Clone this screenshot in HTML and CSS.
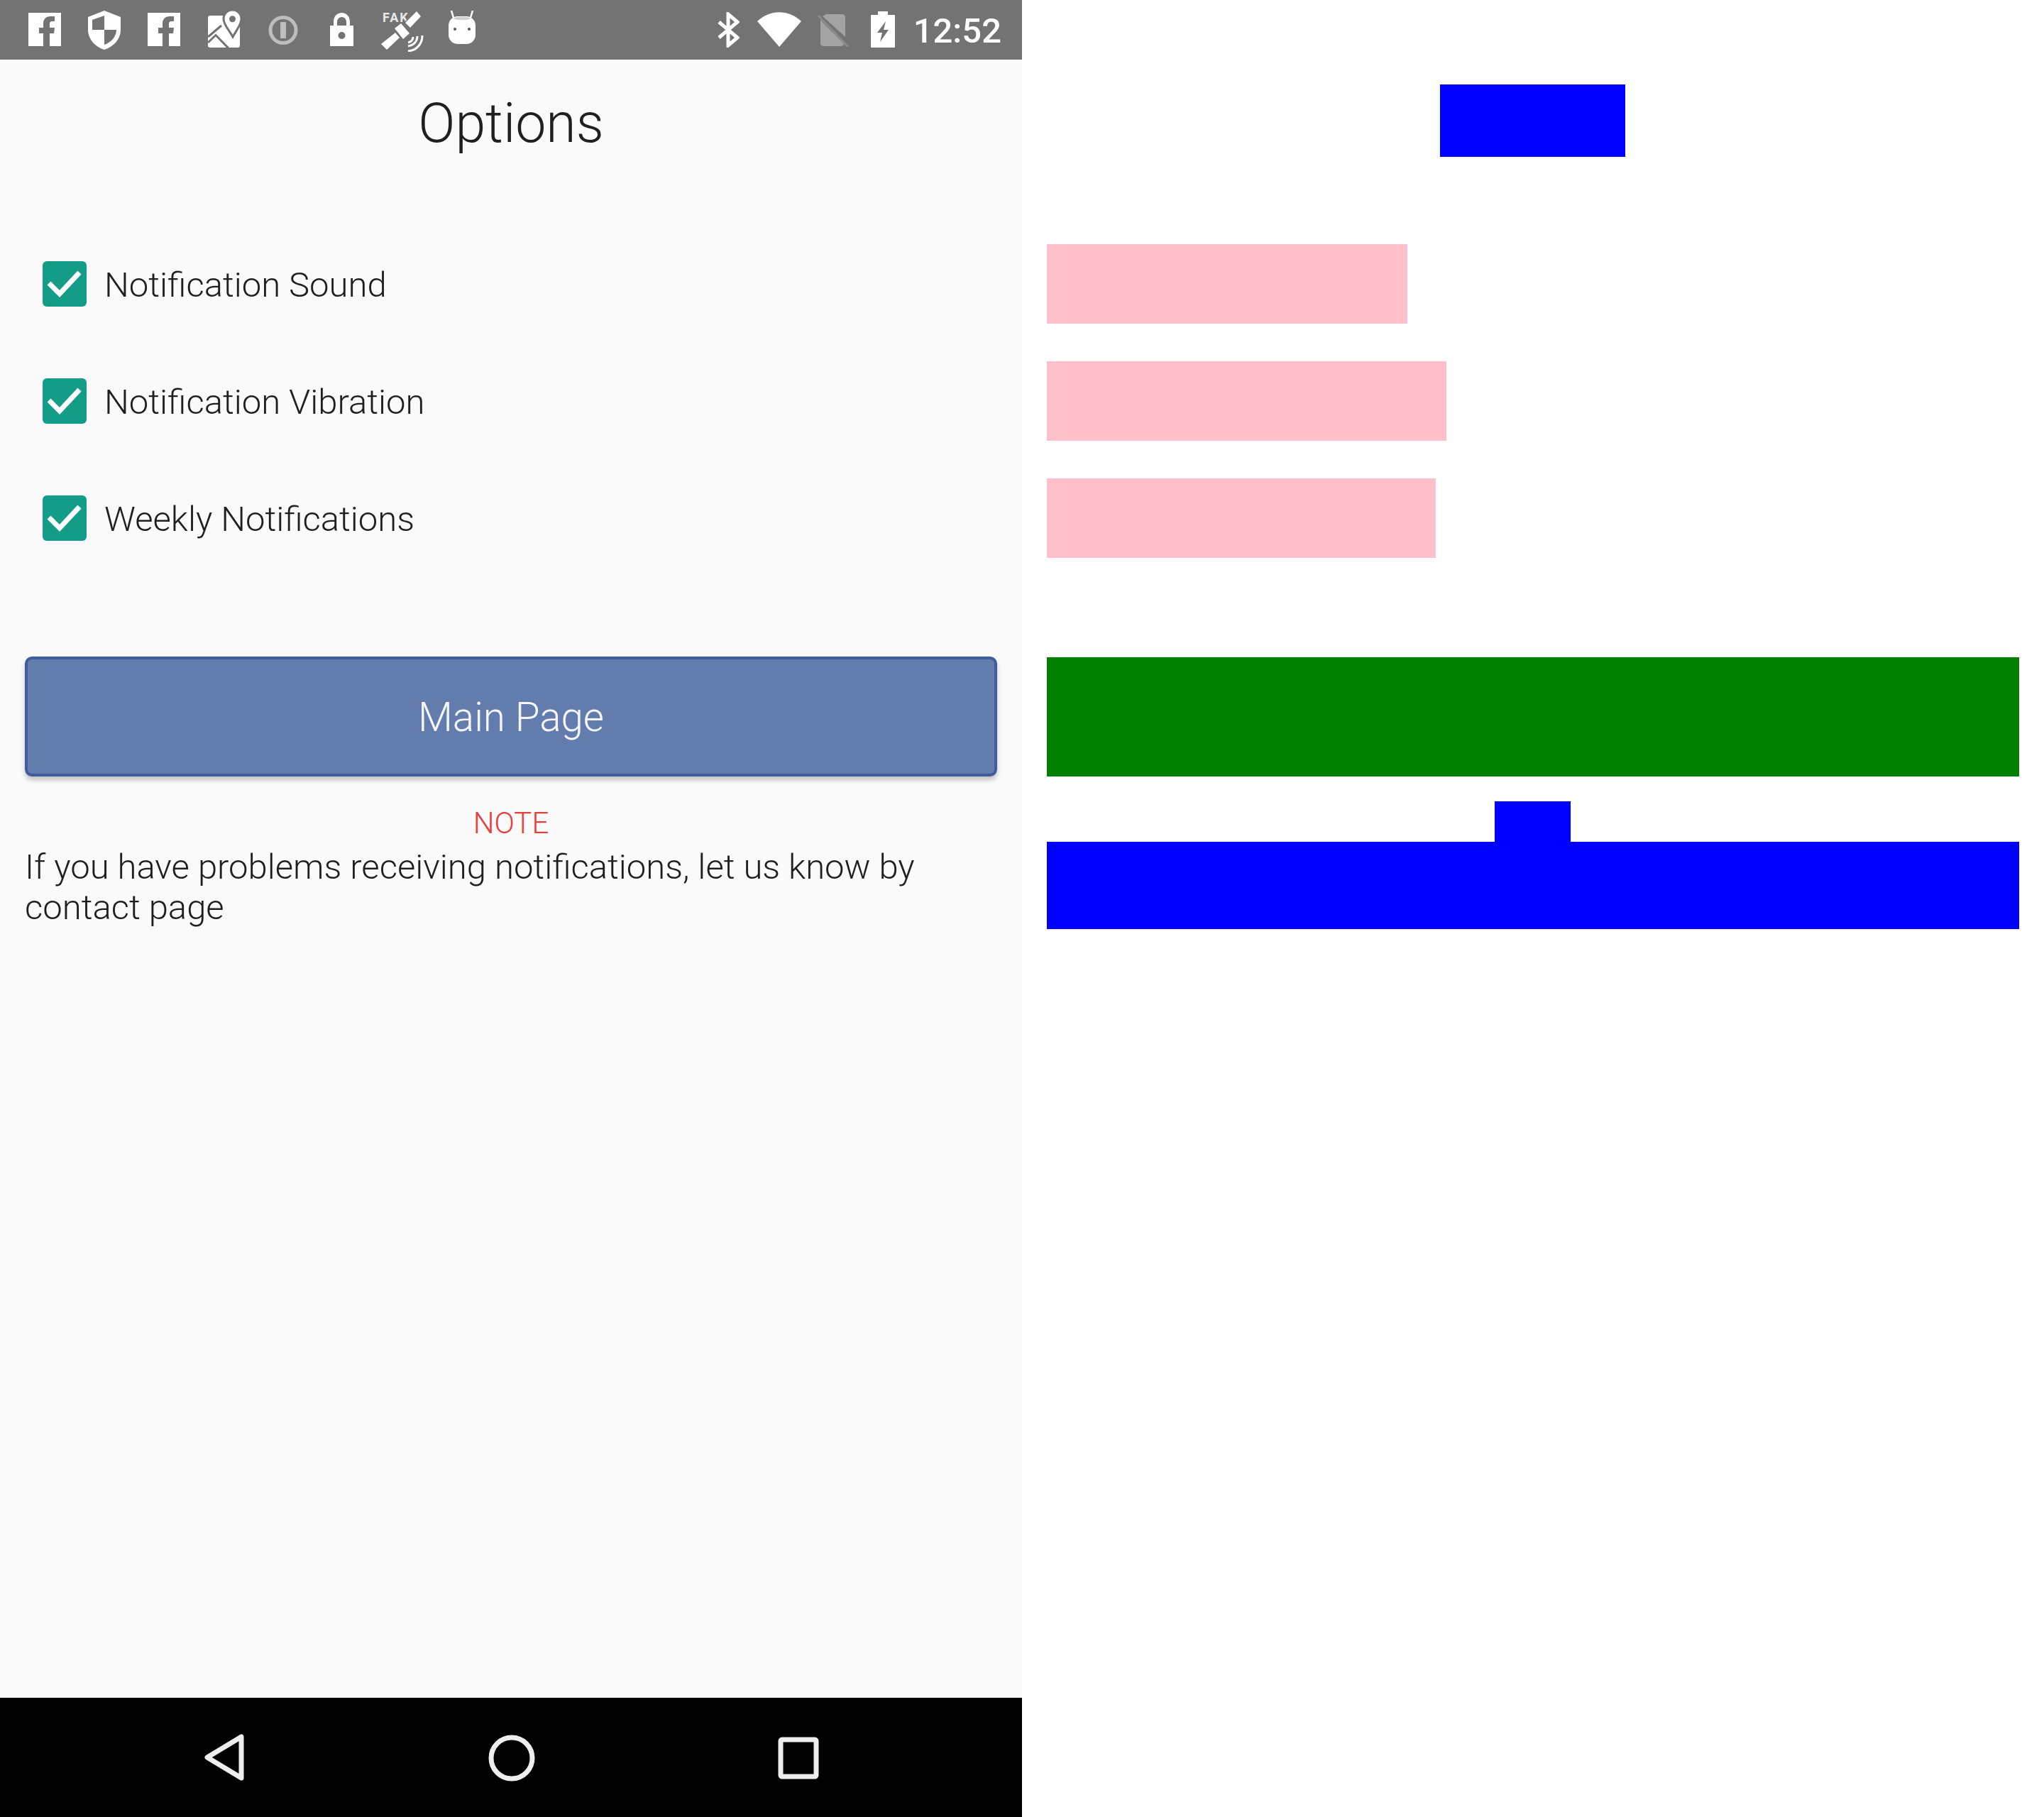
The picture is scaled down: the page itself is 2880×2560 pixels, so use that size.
FILE: index.html
```html
<!DOCTYPE html>
<html lang="en">
<head>
  <meta charset="UTF-8">
  <title>Options</title>
  <link rel="stylesheet" href="styles.css">
</head>
<body>

  <div class="phone">
    <header class="status-bar">
      <div class="status-icons">
        <svg class="ic-fb" viewBox="0 0 46 47"><path fill="#fff" d="M0 0H46V47H30V29H36L37 21H30V16C30 13 31 12 34 12H37V5C35 5 33 5 31 5C25 5 21 9 21 15V21H15V29H21V47H0Z"/></svg>
        <svg class="ic-shield" viewBox="0 0 46 55"><path fill="#fff" fill-rule="evenodd" d="M23 0L46 9V27C46 40 36 51 23 55C10 51 0 40 0 27V9ZM23 7L6 13V27H23ZM23 27V48C32 45 40 37 40 27Z"/></svg>
        <svg class="ic-fb" viewBox="0 0 46 47"><path fill="#fff" d="M0 0H46V47H30V29H36L37 21H30V16C30 13 31 12 34 12H37V5C35 5 33 5 31 5C25 5 21 9 21 15V21H15V29H21V47H0Z"/></svg>
        <svg class="ic-map" viewBox="0 0 48 53">
          <rect x="1" y="8" width="45" height="45" rx="3" fill="#fff"/>
          <path fill="none" stroke="#737373" stroke-width="3" d="M1 38L20 22M1 46L12 35.500L30 54"/>
          <path fill="#fff" stroke="#737373" stroke-width="3" d="M35.500 0C42.500 0 48 5.500 48 12.700C48 21 40 30 36 38C32 30 23 21 23 12.700C23 5.500 28.500 0 35.500 0Z"/>
          <circle cx="35.500" cy="12.700" r="4.500" fill="#737373"/>
        </svg>
        <svg class="ic-info" viewBox="0 0 42 43"><circle cx="21" cy="21.500" r="18" fill="none" stroke="#bdbdbd" stroke-width="5"/><rect x="17" y="10" width="8" height="23" fill="#bdbdbd"/></svg>
        <svg class="ic-lock" viewBox="0 0 33 47"><path fill="#fff" fill-rule="evenodd" d="M5 18V13C5 5 10 0 16.500 0S28 5 28 13V18H33V47H0V18ZM10 18H23V13C23 9 20 6 16.500 6S10 9 10 13ZM16.500 27A5 5 0 1 0 16.510 37A5 5 0 1 0 16.500 27Z"/></svg>
        <svg class="ic-sat" viewBox="0 0 60 58">
          <text class="fake-label" x="2" y="16">FAK</text>
          <path fill="#fff" stroke="#737373" stroke-width="1.500" d="M50 0L57 8L41 25L33 17Z"/>
          <path fill="#fff" d="M19 25L28 18L40 32L31 40ZM20 31L26 38L8 55L0 47Z"/>
          <path fill="none" stroke="#fff" stroke-width="3" d="M58 35C58 47 50 56 38 57M51 36C51 43 46 49 38 50M45 37C45 41 42 44 38 45"/>
        </svg>
        <svg class="ic-droid" viewBox="0 0 38 47">
          <rect y="8" width="38" height="39" rx="13" fill="#fff"/>
          <path d="M6 11C12 8 26 8 32 11C26 14 12 14 6 11Z" fill="#cfcfcf"/>
          <path stroke="#fff" stroke-width="2.500" d="M7 10L4 0M31 10L34 0"/>
          <circle cx="9" cy="26" r="2" fill="#555"/>
          <circle cx="29" cy="26" r="2" fill="#555"/>
        </svg>
      </div>
      <div class="status-icons right">
        <svg class="ic-bt" viewBox="0 0 31 50"><path fill="none" stroke="#fff" stroke-width="5" d="M2 14L28 36L15 47V3L28 14L2 36"/></svg>
        <svg class="ic-wifi" viewBox="0 0 62 49"><path fill="#fff" d="M0 13C18 -4 44 -4 62 13L31 49Z"/></svg>
        <svg class="ic-sim" viewBox="0 0 45 46"><path fill="#a3a3a3" d="M13 0H36C38 0 40 2 40 4V32L8 3ZM5 8L38 42C37 44 36 45 34 45H9C7 45 5 43 5 41Z"/><path stroke="#a3a3a3" stroke-width="3" d="M2 2L44 46" opacity=".5"/></svg>
        <svg class="ic-batt" viewBox="0 0 34 51"><path fill="#fff" fill-rule="evenodd" d="M10 0H24V5H34V51H0V5H10ZM21 14L9 30H16L13 43L25 26H18Z"/></svg>
        <span class="clock">12:52</span>
      </div>
    </header>

    <main class="screen">
      <h1 class="title">Options</h1>

      <section class="option-list">
        <label class="option">
          <span class="check"><svg viewBox="0 0 62 64"><path d="M9 31L24 46L52 16"/></svg></span>
          <span class="option-text">Notification Sound</span>
        </label>
        <label class="option">
          <span class="check"><svg viewBox="0 0 62 64"><path d="M9 31L24 46L52 16"/></svg></span>
          <span class="option-text">Notification Vibration</span>
        </label>
        <label class="option">
          <span class="check"><svg viewBox="0 0 62 64"><path d="M9 31L24 46L52 16"/></svg></span>
          <span class="option-text">Weekly Notifications</span>
        </label>
      </section>

      <a href="#" class="main-btn">Main Page</a>

      <p class="note-head">NOTE</p>
      <p class="note-text">If you have problems receiving notifications, let us know by contact page</p>
    </main>

    <nav class="nav-bar">
      <svg class="nav-back" viewBox="0 0 56 66"><path d="M52 4V62L4 33Z"/></svg>
      <svg class="nav-home" viewBox="0 0 66 66"><circle cx="33" cy="33" r="29"/></svg>
      <svg class="nav-recent" viewBox="0 0 58 60"><rect x="4" y="4" width="50" height="52" rx="2"/></svg>
    </nav>
  </div>

  <aside class="layout-view">
    <div class="box box-title"></div>
    <div class="box box-option box-w1"></div>
    <div class="box box-option box-w2"></div>
    <div class="box box-option box-w3"></div>
    <div class="box box-button"></div>
    <div class="box box-note"></div>
    <div class="box box-text"></div>
  </aside>

</body>
</html>
```

FILE: styles.css
```css
/* --- Basic Setup --- */
:root {
  --status-bg: #737373;
  --screen-bg: #fafafa;
  --teal: #139c88;
  --text-color: #1f1f1f;
}

body {
  margin: 0;
  width: 2880px;
  height: 2560px;
  display: flex;
  overflow: hidden;
  background-color: #fff;
  font-family: Roboto, "Liberation Sans", sans-serif;
  font-weight: 300;
  color: var(--text-color);
}

/* --- Phone --- */
.phone {
  width: 1440px;
  height: 2560px;
  display: flex;
  flex-direction: column;
  background-color: var(--screen-bg);
}

.status-bar {
  height: 84px;
  flex: none;
  display: flex;
  justify-content: space-between;
  align-items: flex-start;
  background-color: var(--status-bg);
  padding: 0 29px 0 40px;
  box-sizing: border-box;
}

.status-icons {
  display: flex;
  align-items: flex-start;
}

.status-icons svg {
  display: block;
  flex: none;
}

.ic-fb { width: 46px; height: 47px; margin-top: 18px; }
.ic-shield { width: 46px; height: 55px; margin: 15px 38px; }
.ic-map { width: 48px; height: 53px; margin: 14px 0 0 38px; }
.ic-info { width: 42px; height: 43px; margin: 21px 0 0 38px; }
.ic-lock { width: 33px; height: 47px; margin: 18px 0 0 45px; }
.ic-sat { width: 60px; height: 58px; margin: 15px 0 0 39px; }
.ic-droid { width: 38px; height: 47px; margin: 15px 0 0 35px; }
.ic-bt { width: 31px; height: 50px; margin-top: 17px; }
.ic-wifi { width: 62px; height: 49px; margin: 17px 0 0 25px; }
.ic-sim { width: 45px; height: 46px; margin: 20px 0 0 22px; }
.ic-batt { width: 34px; height: 51px; margin: 16px 0 0 31px; }

.fake-label {
  font-size: 18px;
  font-weight: 700;
  letter-spacing: 2px;
  fill: #e8e8e8;
}

.clock {
  margin-left: 26px;
  font-size: 49px;
  font-weight: 500;
  line-height: 88px;
  color: #fff;
}

/* --- Screen --- */
.screen {
  flex: 1;
  padding: 0 35px;
}

.title {
  margin: 0;
  padding-top: 43px;
  font-size: 77px;
  font-weight: 300;
  line-height: 94px;
  text-align: center;
}

.option-list {
  display: flex;
  flex-direction: column;
  gap: 101px;
  margin-top: 147px;
  padding-left: 25px;
}

.option {
  display: flex;
  align-items: center;
  gap: 25px;
  height: 64px;
  font-size: 49px;
}

.option-text {
  padding-top: 3px;
}

.check {
  width: 62px;
  height: 64px;
  border-radius: 6px;
  background-color: var(--teal);
}

.check svg {
  display: block;
}

.check path {
  fill: none;
  stroke: #fff;
  stroke-width: 7;
}

.main-btn {
  display: flex;
  justify-content: center;
  align-items: center;
  height: 169px;
  margin-top: 163px;
  padding-top: 2px;
  box-sizing: border-box;
  border: 4px solid #3f5c9e;
  border-radius: 10px;
  background-color: #637cae;
  box-shadow: 0 5px 6px rgba(0, 0, 0, 0.22);
  font-size: 56.500px;
  color: #f4f6fa;
  text-decoration: none;
}

.note-head {
  margin: 41px 0 0;
  font-size: 42px;
  line-height: 50px;
  text-align: center;
  color: #e5403c;
}

.note-text {
  margin: 8px 0 0;
  font-size: 49px;
  line-height: 57px;
}

.nav-bar {
  height: 168px;
  flex: none;
  position: relative;
  background-color: #000;
}

.nav-bar svg {
  position: absolute;
  fill: none;
  stroke: #eee;
  stroke-width: 7;
  stroke-linejoin: round;
}

.nav-back { left: 288px; top: 51px; width: 56px; height: 66px; }
.nav-home { left: 688px; top: 52px; width: 66px; height: 66px; }
.nav-recent { left: 1096px; top: 55px; width: 58px; height: 60px; }

/* --- Layout view on the right --- */
.layout-view {
  width: 1370px;
  margin-left: 35px;
  display: flex;
  flex-direction: column;
  align-items: flex-start;
}

.box-title {
  width: 261px;
  height: 102px;
  margin: 119px 0 0 554px;
  background-color: #00f;
}

.box-option {
  height: 112px;
  margin-top: 53px;
  background-color: #ffc0cb;
}

.box-w1 { width: 508px; margin-top: 123px; }
.box-w2 { width: 563px; }
.box-w3 { width: 548px; }

.box-button {
  width: 100%;
  height: 168px;
  margin-top: 140px;
  background-color: #008000;
}

.box-note {
  width: 107px;
  height: 57px;
  margin: 35px 0 0 631px;
  background-color: #00f;
}

.box-text {
  width: 100%;
  height: 123px;
  background-color: #00f;
}
```
